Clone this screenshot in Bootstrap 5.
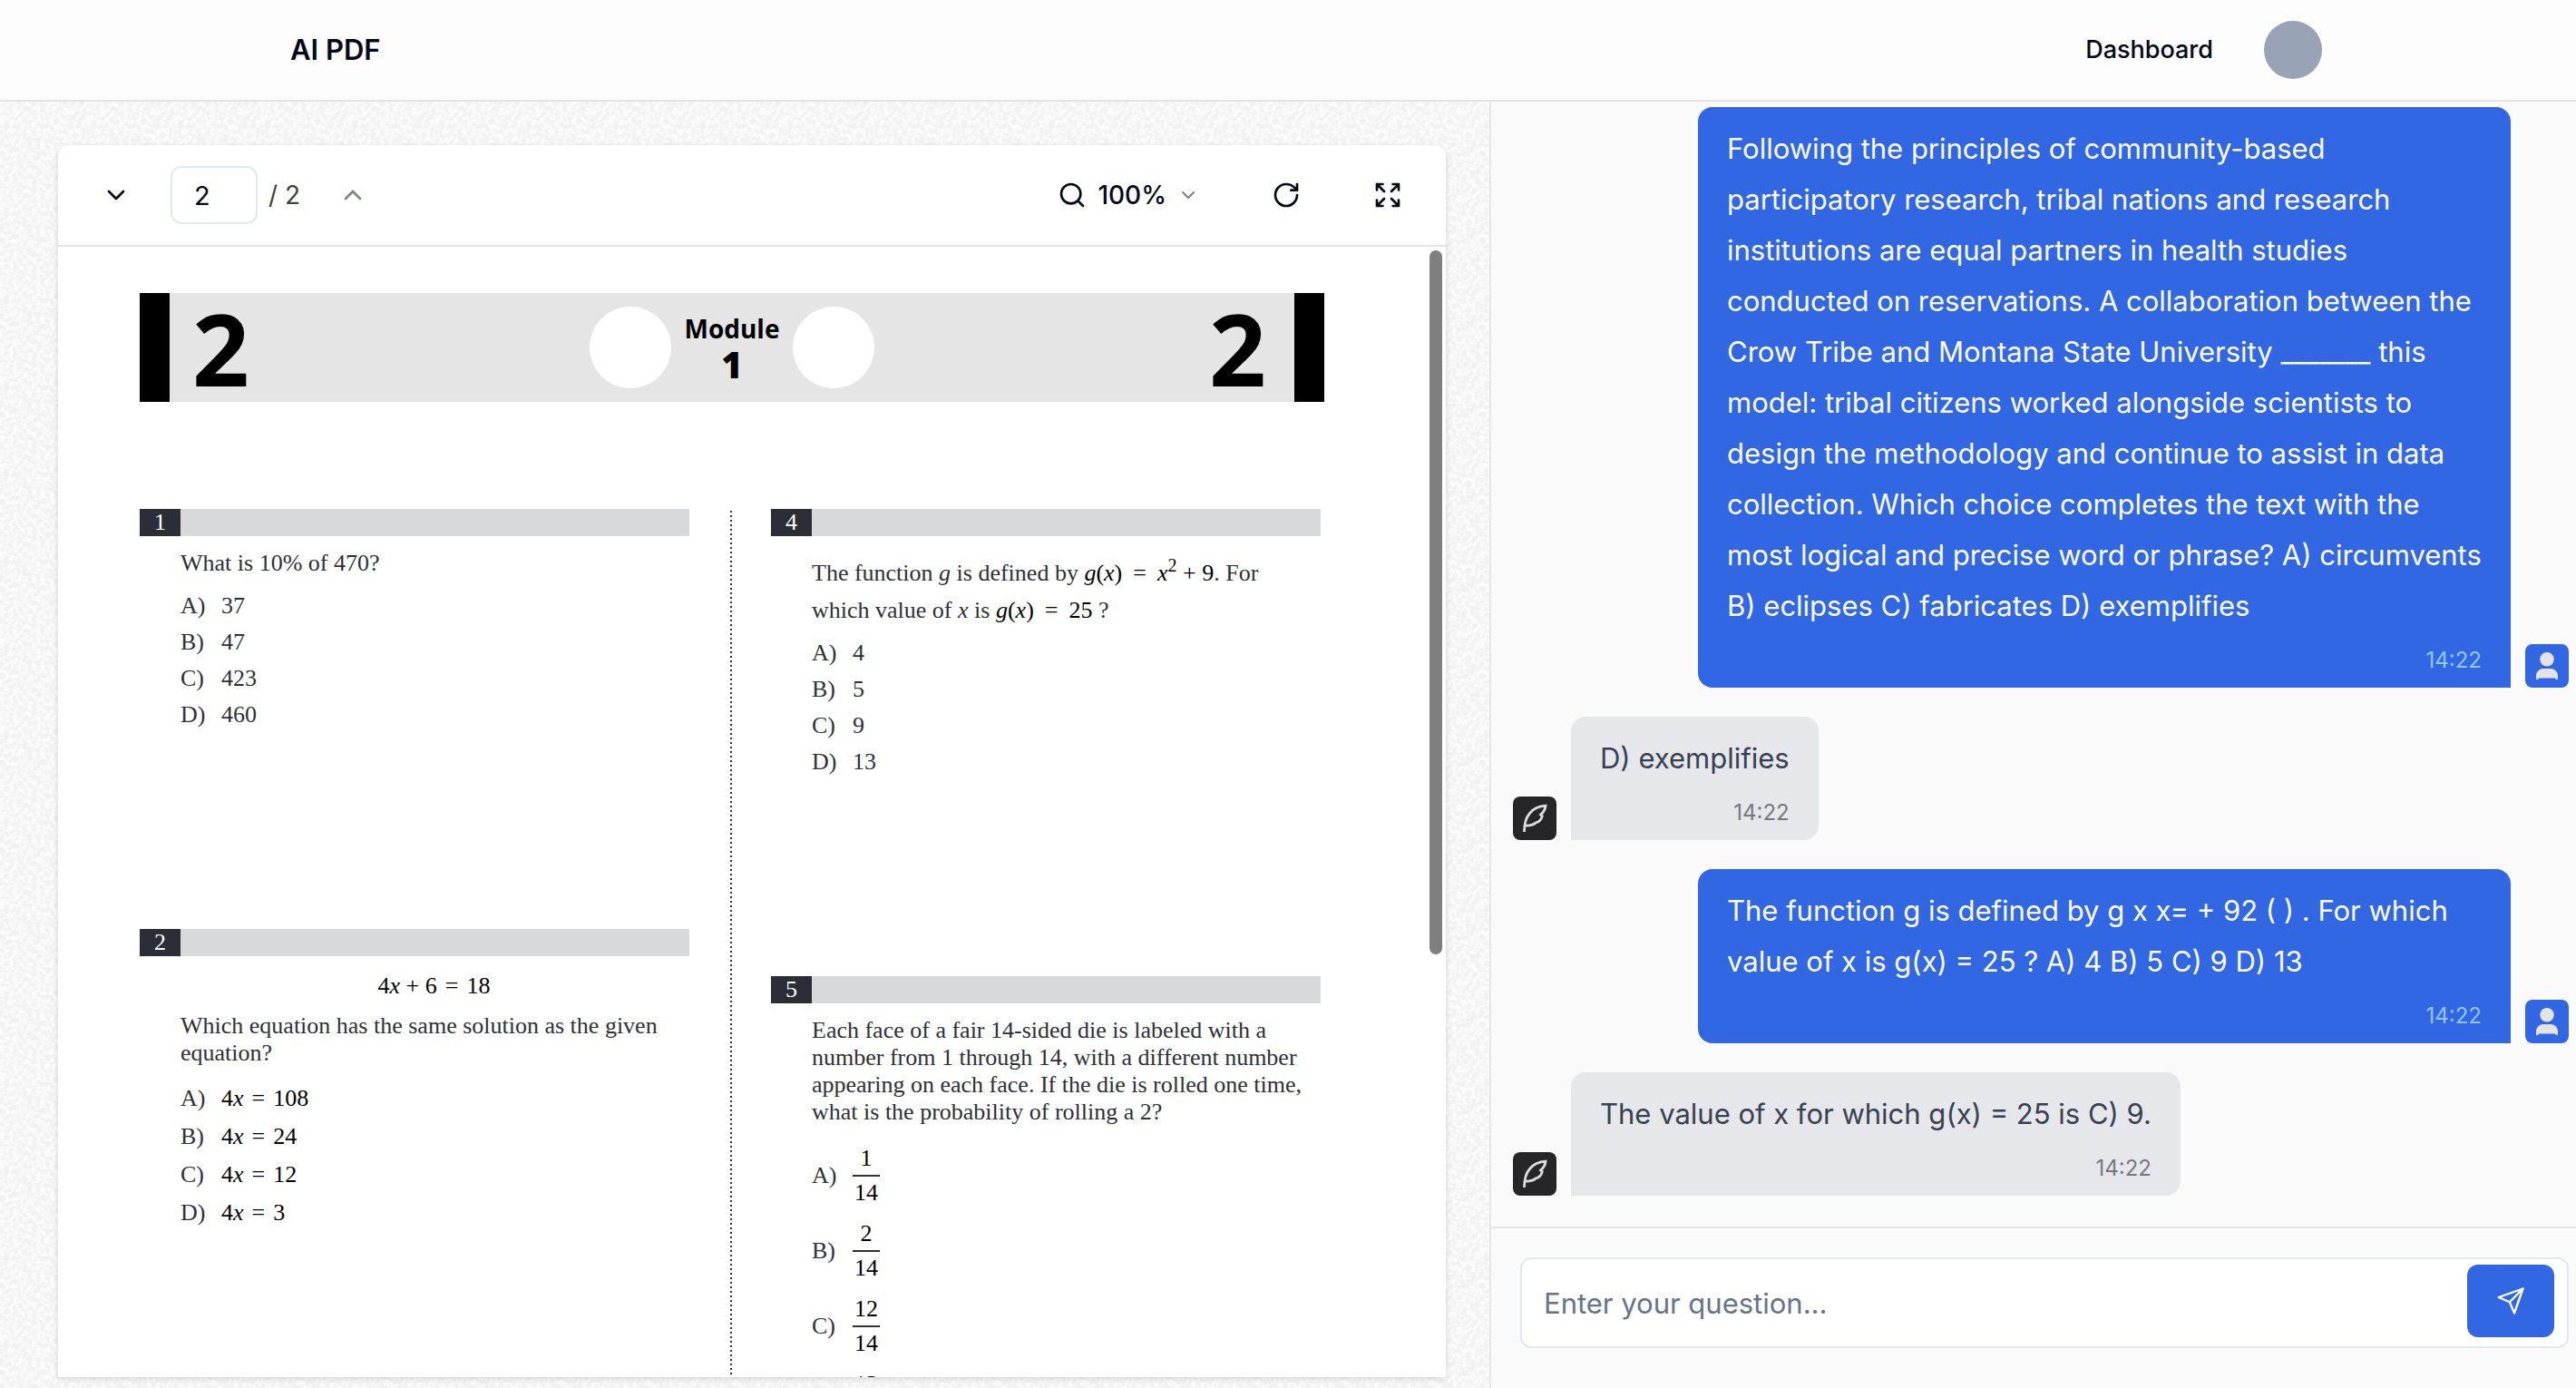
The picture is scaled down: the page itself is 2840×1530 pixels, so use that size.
<!DOCTYPE html>
<html lang="en">
<head>
<meta charset="utf-8">
<meta name="viewport" content="width=device-width, initial-scale=1">
<title>AI PDF</title>
<link href="https://cdn.jsdelivr.net/npm/bootstrap@5.3.0/dist/css/bootstrap.min.css" rel="stylesheet">
<style>
  body { font-family: Inter, sans-serif; font-size: 31px; color: #020817; background: #fafafa; }
  .topbar { height: 112px; padding: 0 280px 0 320px; background: #fdfdfd; border-bottom: 2px solid #e4e4e5; }
  .topbar a { color: #020817; text-decoration: none; line-height: 40px; }
  .topbar .brand { font-weight: 600; font-size: 31px; }
  .topbar .dash { font-weight: 500; font-size: 27px; }
  .me { width: 64px; height: 64px; border: 0; background: #98a4b5; margin-left: 56px; padding: 0; }
  svg { display: block; flex: none; }

  .reader { flex: 1 1 0; min-width: 0; padding: 48px 48px 12px 64px; background-color: #f6f6f6;
    background-image: url("data:image/svg+xml,%3Csvg xmlns='http://www.w3.org/2000/svg' width='96' height='96'%3E%3Cfilter id='n' x='0' y='0' width='1' height='1'%3E%3CfeTurbulence type='fractalNoise' baseFrequency='.2' numOctaves='3' stitchTiles='stitch'/%3E%3CfeColorMatrix values='0 0 0 0 1 0 0 0 0 1 0 0 0 0 1 4 0 0 0 -1.5'/%3E%3C/filter%3E%3Crect width='96' height='96' fill='%23f1f1f1'/%3E%3Crect width='96' height='96' filter='url(%23n)' opacity='.7'/%3E%3C/svg%3E"); }
  .viewer { background: #fff; border-radius: 12px 12px 0 0; box-shadow: 0 2px 6px rgba(0,0,0,.14); }
  .tools { height: 112px; padding: 0 32px; border-bottom: 2px solid #e4e4e7; font-size: 28px; }
  .tools button { border: 0; background: transparent; padding: 0; color: #020817; }
  .tools .icobtn { width: 64px; height: 64px; }
  .tools .total { margin: 0 26px 0 12px; color: #3f3f46; white-space: nowrap; }
  .page-no { width: 96px; height: 64px; margin-left: 28px; border: 2px solid #e2e8f0; border-radius: 12px; padding: 0 24px; font-size: 29px; color: #020817; box-shadow: none; }
  .zoomlvl { font-weight: 500; gap: 12px; margin-right: 16px; }

  .sheetbox { position: relative; }
  .thumb { position: absolute; top: 4px; right: 4px; width: 14px; height: 776px; border-radius: 7px; background: #7f7f7f; z-index: 2; }
  .sheet { padding: 51px 134px 0 90px; font-family: "Liberation Serif", serif; font-size: 26px; line-height: 30px; color: #2e303a; }
  .banner { height: 120px; background: #e5e5e5; border: solid #000; border-width: 0 33px; font-family: "Open Sans", sans-serif; font-weight: 700; color: #000; }
  .bignum { flex: 1 1 0; padding: 0 31px 0 25px; font-size: 110px; line-height: 116px; }
  .disc { width: 90px; height: 90px; border-radius: 50%; background: #fff; }
  .modname { width: 134px; padding-top: 2px; font-size: 28px; line-height: 36px; text-align: center; }
  .modname b { font-size: 40px; line-height: 44px; display: block; }
  .cols { margin-top: 118px; }
  .quiz { width: 606px; flex: none; }
  .dots { width: 2px; flex: none; margin: 2px 43px 0 45px; background: repeating-linear-gradient(#2e303a 0 2px, #fff 2px 5px); }
  .qhead { height: 30px; background: #d8d9db; }
  .qhead span { display: block; width: 45px; height: 30px; background: #2b2d37; color: #fff; text-align: center; font-size: 26px; }
  .qbody { padding-left: 45px; }
  .qbody p { margin: 0; white-space: nowrap; }
  .m { color: #000; }
  .r { margin: 0 9px; }
  .opts { list-style: none; margin: 0; padding: 0; }
  .opts li { display: flex; align-items: center; height: 40px; }
  .opts li > :first-child { width: 45px; }
  .opts.eq li { height: 42px; }
  .opts.fr li { height: 83px; }
  .q1 { height: 463px; }
  .q4 { height: 515px; }
  .q1 .qbody { padding-top: 15px; }
  .q1 .opts { margin-top: 12px; }
  .q4 .qbody { padding-top: 20px; }
  .q4 p { line-height: 41px; }
  .q4 .r { margin: 0 12px; }
  .q4 sup { font-size: 20px; line-height: 0; }
  .q4 .opts { margin-top: 7px; }
  .q2 .qbody { padding-top: 18px; }
  .q2 .center { text-align: center; padding-right: 2px; margin-bottom: 14px; }
  .q2 .opts { margin-top: 14px; }
  .q5 .qbody { padding-top: 15px; }
  .q5 .opts { margin-top: 13px; }
  .frac { width: 30px; text-align: center; color: #000; line-height: 36px; }
  .frac i { display: block; font-style: normal; }
  .frac i + i { border-top: 2px solid #333; }

  .chat { width: 1198px; flex: none; border-left: 2px solid #e5e7eb; background: #fafafa; }
  .log { padding: 6px 8px 34px 24px; gap: 32px; }
  .msg { gap: 16px; align-items: flex-end; }
  .bub { padding: 18px 32px 14px; line-height: 56px; max-width: 896px; border-radius: 16px; }
  .bub time { display: block; margin-top: 16px; font-size: 24px; line-height: 32px; text-align: right; }
  .bub p { margin: 0; }
  .mine .bub { background: #3267e3; color: #fafafa; border-bottom-right-radius: 0; }
  .mine time { color: #93c5fd; }
  .bot .bub { background: #e5e7eb; color: #374151; border-bottom-left-radius: 0; }
  .bot time { color: #77787c; }
  .ava { width: 48px; height: 48px; border-radius: 8px; display: flex; align-items: center; justify-content: center; }
  .mine .ava { background: #3267e3; }
  .bot .ava { background: #262628; }
  .ask { border-top: 2px solid #e5e5e5; padding: 32px 8px 44px 32px; }
  .askbox { height: 100px; border: 2px solid #e2e8f0; border-radius: 12px; background: #fff; padding: 0 14px 4px 0; }
  .askbox input { border: 0; background: transparent; box-shadow: none !important; font-size: 31px; padding: 4px 24px 0; height: 80px; }
  .askbox input::placeholder { color: #64748b; opacity: 1; }
  .send { width: 96px; height: 80px; border: 0; border-radius: 12px; background: #3267e3; padding: 0; display: flex; align-items: center; justify-content: center; }
</style>
<script src="https://cdn.jsdelivr.net/npm/bootstrap@5.3.0/dist/js/bootstrap.bundle.min.js"></script>
</head>
<body>
<svg width="0" height="0" class="position-absolute" aria-hidden="true">
  <symbol id="user" viewBox="0 0 48 48"><circle cx="24" cy="16.700" r="7.700" fill="#e4e4e7"/><path d="M12 39v-4a8 8 0 0 1 8-8h8a8 8 0 0 1 8 8v4h-2.500v-1.500h-19V39z" fill="#e4e4e7"/></symbol>
  <symbol id="quill" viewBox="0 0 48 48"><path d="M12.500 39c0-10 2-16 6-20.500C23 13 29 10.500 36 10.200c-.5 3.800-2 7-5.500 9.800l1.800 1.500c-1.300 5.500-4.300 6.500-7.300 7.500-2.500 3-7 3-11.500 3.200" fill="none" stroke="#dcdcde" stroke-width="2.800"/></symbol>
</svg>
<div class="vh-100 d-flex flex-column overflow-hidden">
  <header class="topbar d-flex align-items-center justify-content-between flex-shrink-0">
    <a class="brand" href="#">AI PDF</a>
    <div class="d-flex align-items-center">
      <a class="dash" href="#">Dashboard</a>
      <button class="me rounded-circle" type="button" aria-label="Account"></button>
    </div>
  </header>

  <main class="d-flex flex-grow-1 overflow-hidden">
    <section class="reader d-flex flex-column">
      <div class="viewer d-flex flex-column flex-grow-1 overflow-hidden">
        <div class="tools d-flex align-items-center justify-content-between flex-shrink-0">
          <div class="d-flex align-items-center">
            <button class="icobtn d-flex align-items-center justify-content-center" type="button" aria-label="Next page"><svg width="32" height="32" viewBox="0 0 24 24" fill="none" stroke="currentColor" stroke-width="2" stroke-linecap="round" stroke-linejoin="round"><path d="m6 9 6 6 6-6"/></svg></button>
            <input class="form-control page-no" type="text" value="2" aria-label="Page">
            <span class="total">/ 2</span>
            <button class="icobtn d-flex align-items-center justify-content-center" type="button" aria-label="Previous page" disabled><svg width="32" height="32" viewBox="0 0 24 24" fill="none" stroke="#808389" stroke-width="2" stroke-linecap="round" stroke-linejoin="round"><path d="m18 15-6-6-6 6"/></svg></button>
          </div>
          <div class="d-flex align-items-center">
            <button class="zoomlvl d-flex align-items-center" type="button"><svg width="32" height="32" viewBox="0 0 24 24" fill="none" stroke="currentColor" stroke-width="2" stroke-linecap="round"><circle cx="11" cy="11" r="8"/><path d="m21 21-4-4"/></svg>100%<svg width="24" height="24" viewBox="0 0 24 24" fill="none" stroke="#808389" stroke-width="2" stroke-linecap="round" stroke-linejoin="round"><path d="m6 9 6 6 6-6"/></svg></button>
            <button class="icobtn d-flex align-items-center justify-content-center ms-5" type="button" aria-label="Rotate"><svg width="32" height="32" viewBox="0 0 24 24" fill="none" stroke="currentColor" stroke-width="2" stroke-linecap="round" stroke-linejoin="round"><path d="M21 12a9 9 0 1 1-9-9c2.520 0 4.930 1 6.740 2.740L21 8"/><path d="M21 3v5h-5"/></svg></button>
            <button class="icobtn d-flex align-items-center justify-content-center ms-5" type="button" aria-label="Full screen"><svg width="32" height="32" viewBox="0 0 24 24" fill="none" stroke="currentColor" stroke-width="2" stroke-linecap="round" stroke-linejoin="round"><path d="m21 21-6-6m6 6v-4.800m0 4.800h-4.800M3 16.200V21m0 0h4.800M3 21l6-6M21 7.800V3m0 0h-4.800M21 3l-6 6M3 7.800V3m0 0h4.800M3 3l6 6"/></svg></button>
          </div>
        </div>
        <div class="sheetbox flex-grow-1 overflow-hidden">
          <div class="thumb"></div>
          <article class="sheet">
            <div class="banner d-flex align-items-center">
              <span class="bignum">2</span>
              <div class="d-flex align-items-center">
                <span class="disc"></span>
                <span class="modname">Module <b>1</b></span>
                <span class="disc"></span>
              </div>
              <span class="bignum text-end">2</span>
            </div>
            <div class="cols d-flex">
              <div class="quiz">
                <section class="q1">
                  <div class="qhead"><span>1</span></div>
                  <div class="qbody">
                    <p>What is 10% of 470?</p>
                    <ul class="opts">
                      <li><span>A)</span><span>37</span></li>
                      <li><span>B)</span><span>47</span></li>
                      <li><span>C)</span><span>423</span></li>
                      <li><span>D)</span><span>460</span></li>
                    </ul>
                  </div>
                </section>
                <section class="q2">
                  <div class="qhead"><span>2</span></div>
                  <div class="qbody">
                    <p class="center m">4<em>x</em> + 6<span class="r">=</span>18</p>
                    <p>Which equation has the same solution as the given<br>equation?</p>
                    <ul class="opts eq">
                      <li><span>A)</span><span class="m">4<em>x</em><span class="r">=</span>108</span></li>
                      <li><span>B)</span><span class="m">4<em>x</em><span class="r">=</span>24</span></li>
                      <li><span>C)</span><span class="m">4<em>x</em><span class="r">=</span>12</span></li>
                      <li><span>D)</span><span class="m">4<em>x</em><span class="r">=</span>3</span></li>
                    </ul>
                  </div>
                </section>
              </div>
              <div class="dots"></div>
              <div class="quiz">
                <section class="q4">
                  <div class="qhead"><span>4</span></div>
                  <div class="qbody">
                    <p>The function <em>g</em> is defined by <span class="m"><em>g</em>(<em>x</em>)<span class="r">=</span><em>x</em><sup>2</sup> + 9</span>. For<br>which value of <em>x</em> is <span class="m"><em>g</em>(<em>x</em>)<span class="r">=</span>25</span> ?</p>
                    <ul class="opts">
                      <li><span>A)</span><span>4</span></li>
                      <li><span>B)</span><span>5</span></li>
                      <li><span>C)</span><span>9</span></li>
                      <li><span>D)</span><span>13</span></li>
                    </ul>
                  </div>
                </section>
                <section class="q5">
                  <div class="qhead"><span>5</span></div>
                  <div class="qbody">
                    <p>Each face of a fair 14-sided die is labeled with a<br>number from 1 through 14, with a different number<br>appearing on each face. If the die is rolled one time,<br>what is the probability of rolling a 2?</p>
                    <ul class="opts fr">
                      <li><span>A)</span><span class="frac"><i>1</i><i>14</i></span></li>
                      <li><span>B)</span><span class="frac"><i>2</i><i>14</i></span></li>
                      <li><span>C)</span><span class="frac"><i>12</i><i>14</i></span></li>
                      <li><span>D)</span><span class="frac"><i>13</i><i>14</i></span></li>
                    </ul>
                  </div>
                </section>
              </div>
            </div>
          </article>
        </div>
      </div>
    </section>

    <aside class="chat d-flex flex-column">
      <div class="log d-flex flex-column flex-grow-1 overflow-hidden">
        <div class="msg mine d-flex justify-content-end">
          <div class="bub"><p>Following the principles of community-based participatory research, tribal nations and research institutions are equal partners in health studies conducted on reservations. A collaboration between the Crow Tribe and Montana State University _______ this model: tribal citizens worked alongside scientists to design the methodology and continue to assist in data collection. Which choice completes the text with the most logical and precise word or phrase? A) circumvents B) eclipses C) fabricates D) exemplifies</p><time>14:22</time></div>
          <span class="ava flex-shrink-0"><svg width="48" height="48"><use href="#user"/></svg></span>
        </div>
        <div class="msg bot d-flex">
          <span class="ava flex-shrink-0"><svg width="48" height="48"><use href="#quill"/></svg></span>
          <div class="bub"><p>D) exemplifies</p><time>14:22</time></div>
        </div>
        <div class="msg mine d-flex justify-content-end">
          <div class="bub"><p>The function g is defined by g x x= + 92 ( ) . For which value of x is g(x) = 25 ? A) 4 B) 5 C) 9 D) 13</p><time>14:22</time></div>
          <span class="ava flex-shrink-0"><svg width="48" height="48"><use href="#user"/></svg></span>
        </div>
        <div class="msg bot d-flex">
          <span class="ava flex-shrink-0"><svg width="48" height="48"><use href="#quill"/></svg></span>
          <div class="bub"><p>The value of x for which g(x) = 25 is C) 9.</p><time>14:22</time></div>
        </div>
      </div>
      <form class="ask">
        <div class="askbox d-flex align-items-center">
          <input class="form-control" type="text" placeholder="Enter your question..." aria-label="Enter your question">
          <button class="send flex-shrink-0" type="button" aria-label="Send"><svg width="32" height="32" viewBox="0 0 32 32" fill="none" stroke="#fff" stroke-width="2.300" stroke-linecap="round" stroke-linejoin="round"><path d="M29.500 2.500 2.700 12l12.100 5.200L20 29.500z"/><path d="M29.500 2.500 14.800 17.200"/></svg></button>
        </div>
      </form>
    </aside>
  </main>
</div>
</body>
</html>
